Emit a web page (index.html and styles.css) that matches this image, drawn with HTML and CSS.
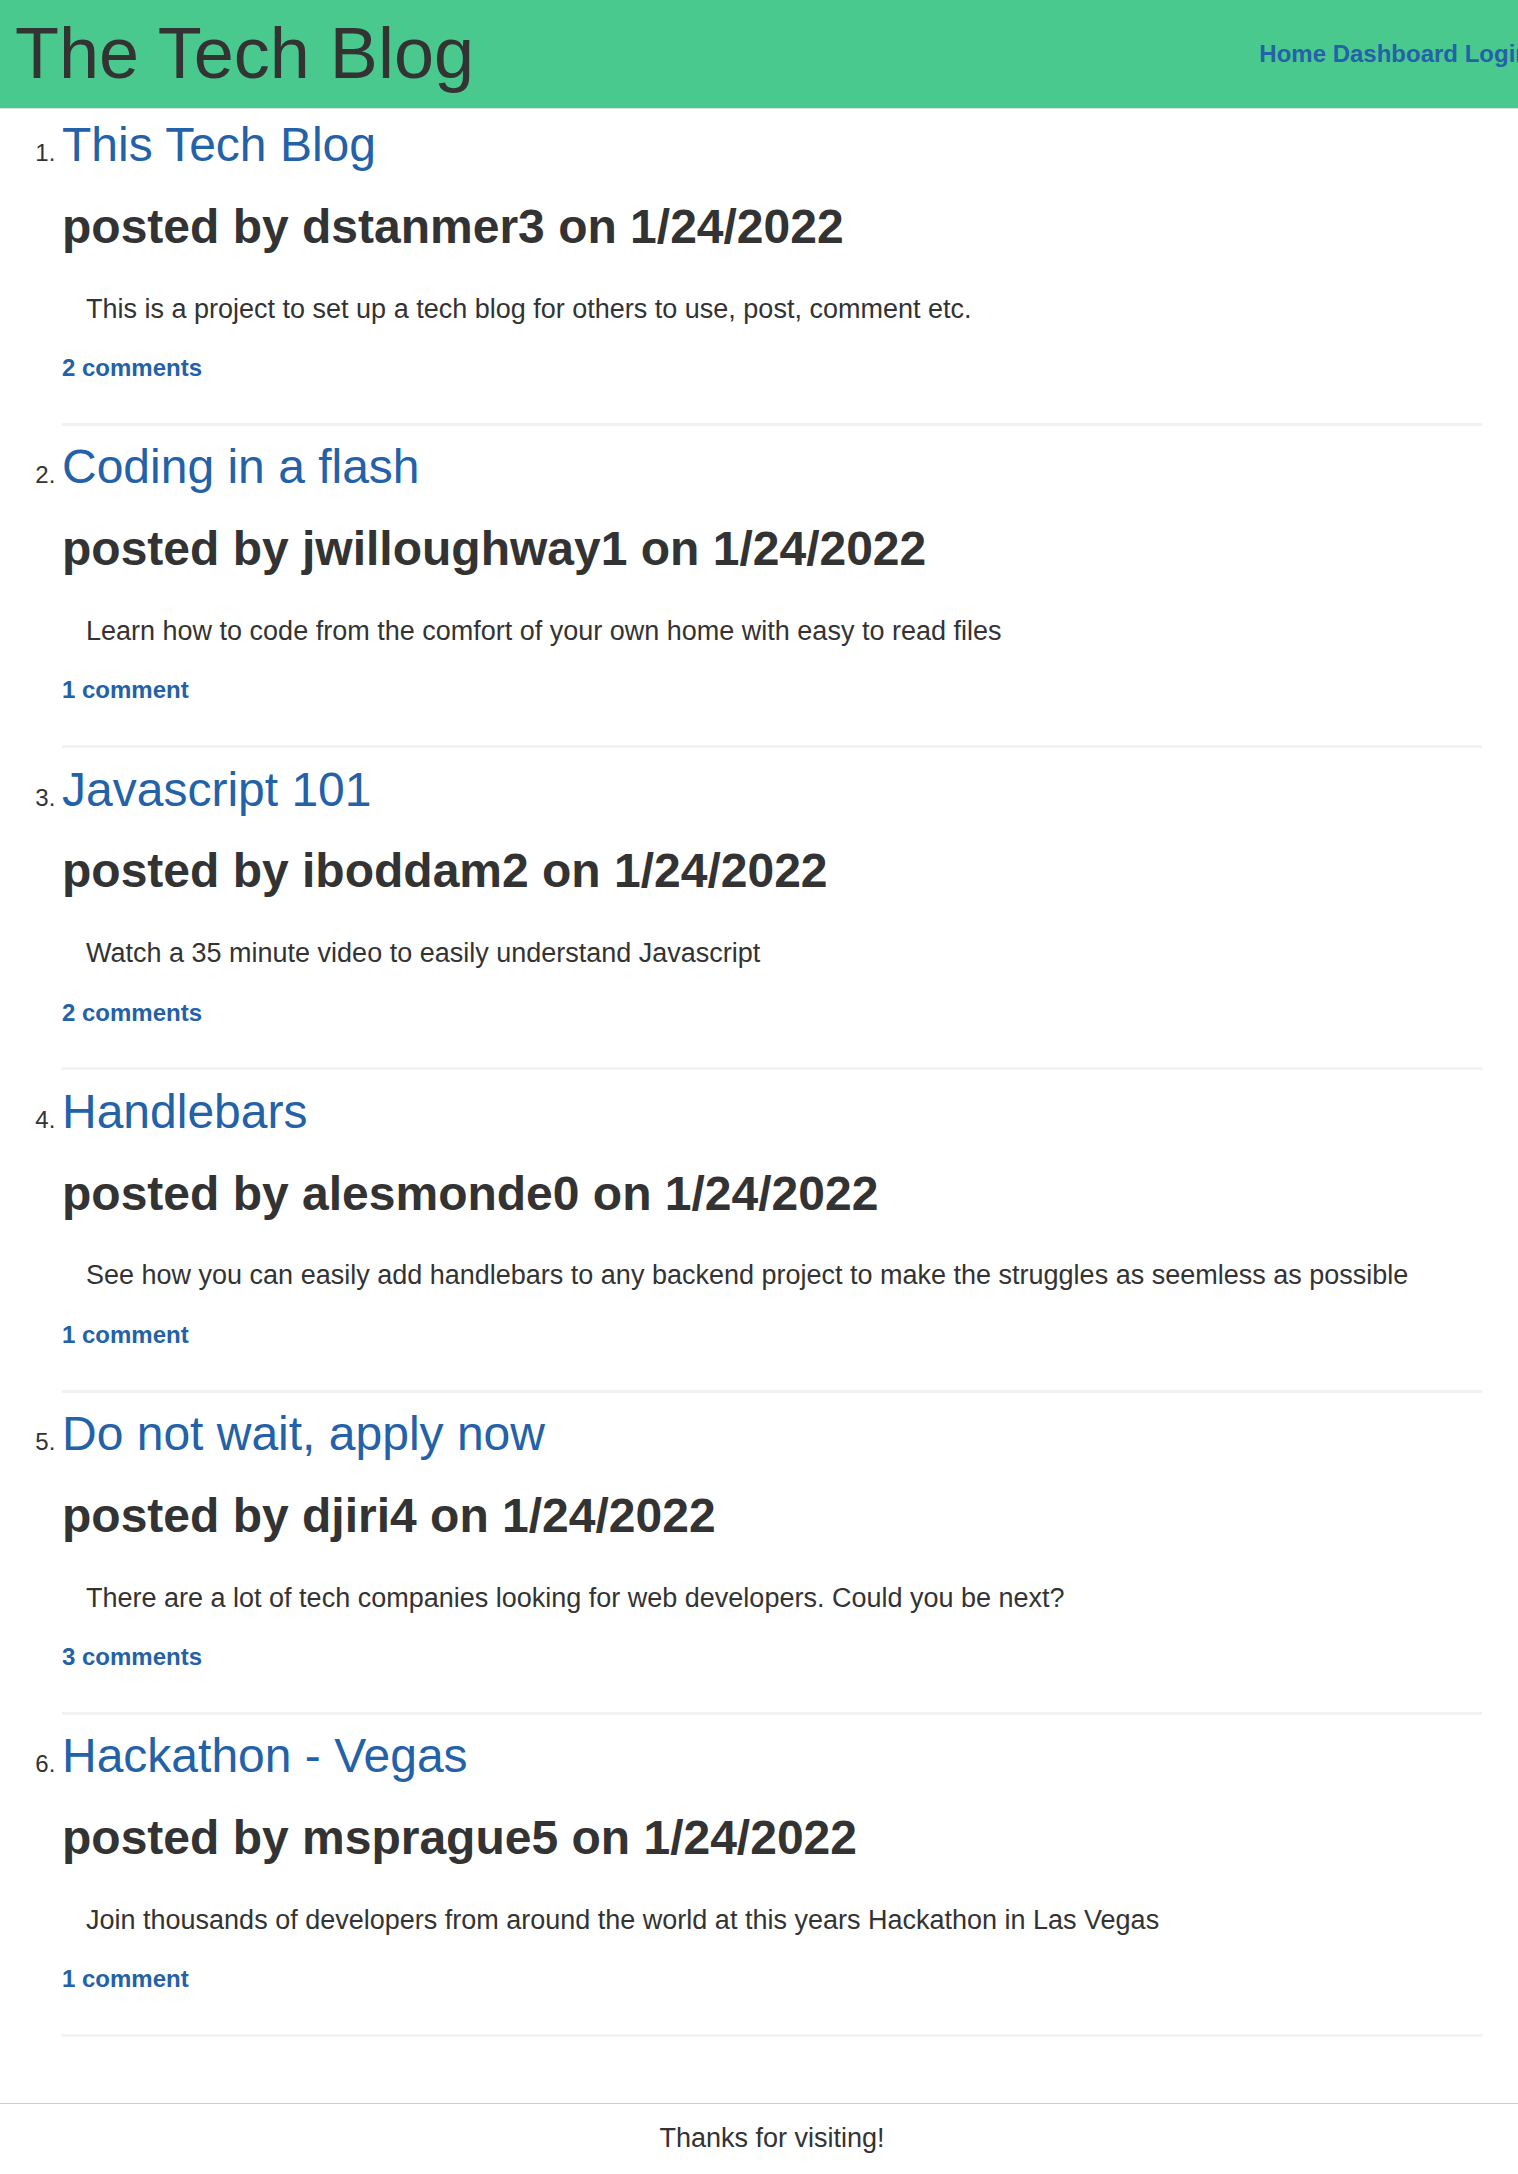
FILE: index.html
```html
<!DOCTYPE html>
<html lang="en">
<head>
<meta charset="utf-8">
<title>The Tech Blog</title>
<link rel="stylesheet" href="styles.css">
</head>
<body>
<header class="site-header">
  <h1 class="site-title">The Tech Blog</h1>
  <nav class="site-nav">
    <a href="#">Home</a>
    <a href="#">Dashboard</a>
    <a href="#">Login</a>
  </nav>
</header>
<main class="content">
  <ol class="post-list">
    <li class="post">
      <h2 class="post-title"><a href="#">This Tech Blog</a></h2>
      <h1 class="post-meta">posted by dstanmer3 on 1/24/2022</h1>
      <p class="post-body">This is a project to set up a tech blog for others to use, post, comment etc.</p>
      <a class="post-comments" href="#">2 comments</a>
      <hr class="post-rule">
    </li>
    <li class="post">
      <h2 class="post-title"><a href="#">Coding in a flash</a></h2>
      <h1 class="post-meta">posted by jwilloughway1 on 1/24/2022</h1>
      <p class="post-body">Learn how to code from the comfort of your own home with easy to read files</p>
      <a class="post-comments" href="#">1 comment</a>
      <hr class="post-rule">
    </li>
    <li class="post">
      <h2 class="post-title"><a href="#">Javascript 101</a></h2>
      <h1 class="post-meta">posted by iboddam2 on 1/24/2022</h1>
      <p class="post-body">Watch a 35 minute video to easily understand Javascript</p>
      <a class="post-comments" href="#">2 comments</a>
      <hr class="post-rule">
    </li>
    <li class="post">
      <h2 class="post-title"><a href="#">Handlebars</a></h2>
      <h1 class="post-meta">posted by alesmonde0 on 1/24/2022</h1>
      <p class="post-body">See how you can easily add handlebars to any backend project to make the struggles as seemless as possible</p>
      <a class="post-comments" href="#">1 comment</a>
      <hr class="post-rule">
    </li>
    <li class="post">
      <h2 class="post-title"><a href="#">Do not wait, apply now</a></h2>
      <h1 class="post-meta">posted by djiri4 on 1/24/2022</h1>
      <p class="post-body">There are a lot of tech companies looking for web developers. Could you be next?</p>
      <a class="post-comments" href="#">3 comments</a>
      <hr class="post-rule">
    </li>
    <li class="post">
      <h2 class="post-title"><a href="#">Hackathon - Vegas</a></h2>
      <h1 class="post-meta">posted by msprague5 on 1/24/2022</h1>
      <p class="post-body">Join thousands of developers from around the world at this years Hackathon in Las Vegas</p>
      <a class="post-comments" href="#">1 comment</a>
      <hr class="post-rule">
    </li>
  </ol>
</main>
<footer class="site-footer">Thanks for visiting!</footer>
</body>
</html>
```

FILE: styles.css
```css
html, body {
  overflow-x: hidden;
}

body {
  margin: 0;
  font-family: "Liberation Sans", Arial, Helvetica, sans-serif;
  color: #333333;
  background: #ffffff;
}

a {
  color: #2361a8;
  text-decoration: none;
}

.site-header {
  display: flex;
  align-items: center;
  justify-content: space-between;
  height: 108px;
  padding-left: 15px;
  background: #4ac98f;
  border-bottom: 1px solid #d3e6dc;
}

.site-title {
  margin: 0;
  font-size: 72px;
  font-weight: 400;
  line-height: 1.1;
  color: #333333;
  white-space: nowrap;
}

.site-nav {
  flex-shrink: 0;
  margin-right: -12px;
  font-size: 24px;
  font-weight: 700;
  white-space: nowrap;
}

.post-list {
  margin: 0;
  padding: 0 36px 0 62px;
}

.post {
  font-size: 24px;
  line-height: 1.2;
}

.post-title {
  margin: 10px 0 0;
  font-size: 48px;
  font-weight: 400;
  line-height: 1.1;
}

.post-meta {
  margin: 29px 0 0;
  font-size: 48px;
  font-weight: 700;
  line-height: 1.1;
}

.post-body {
  margin: 39px 0 0;
  padding-left: 24px;
  font-size: 27px;
  line-height: 1.2;
}

.post-comments {
  display: block;
  margin-top: 29px;
  font-size: 24px;
  font-weight: 700;
  line-height: 1.2;
}

.post-rule {
  height: 3px;
  margin: 40px 0 15.5px;
  border: 0;
  background: #f2f2f2;
}

.site-footer {
  margin-top: 66px;
  padding: 18px 0 18px 26px;
  border-top: 1px solid #cccccc;
  text-align: center;
  font-size: 27px;
  line-height: 1.2;
}
```
